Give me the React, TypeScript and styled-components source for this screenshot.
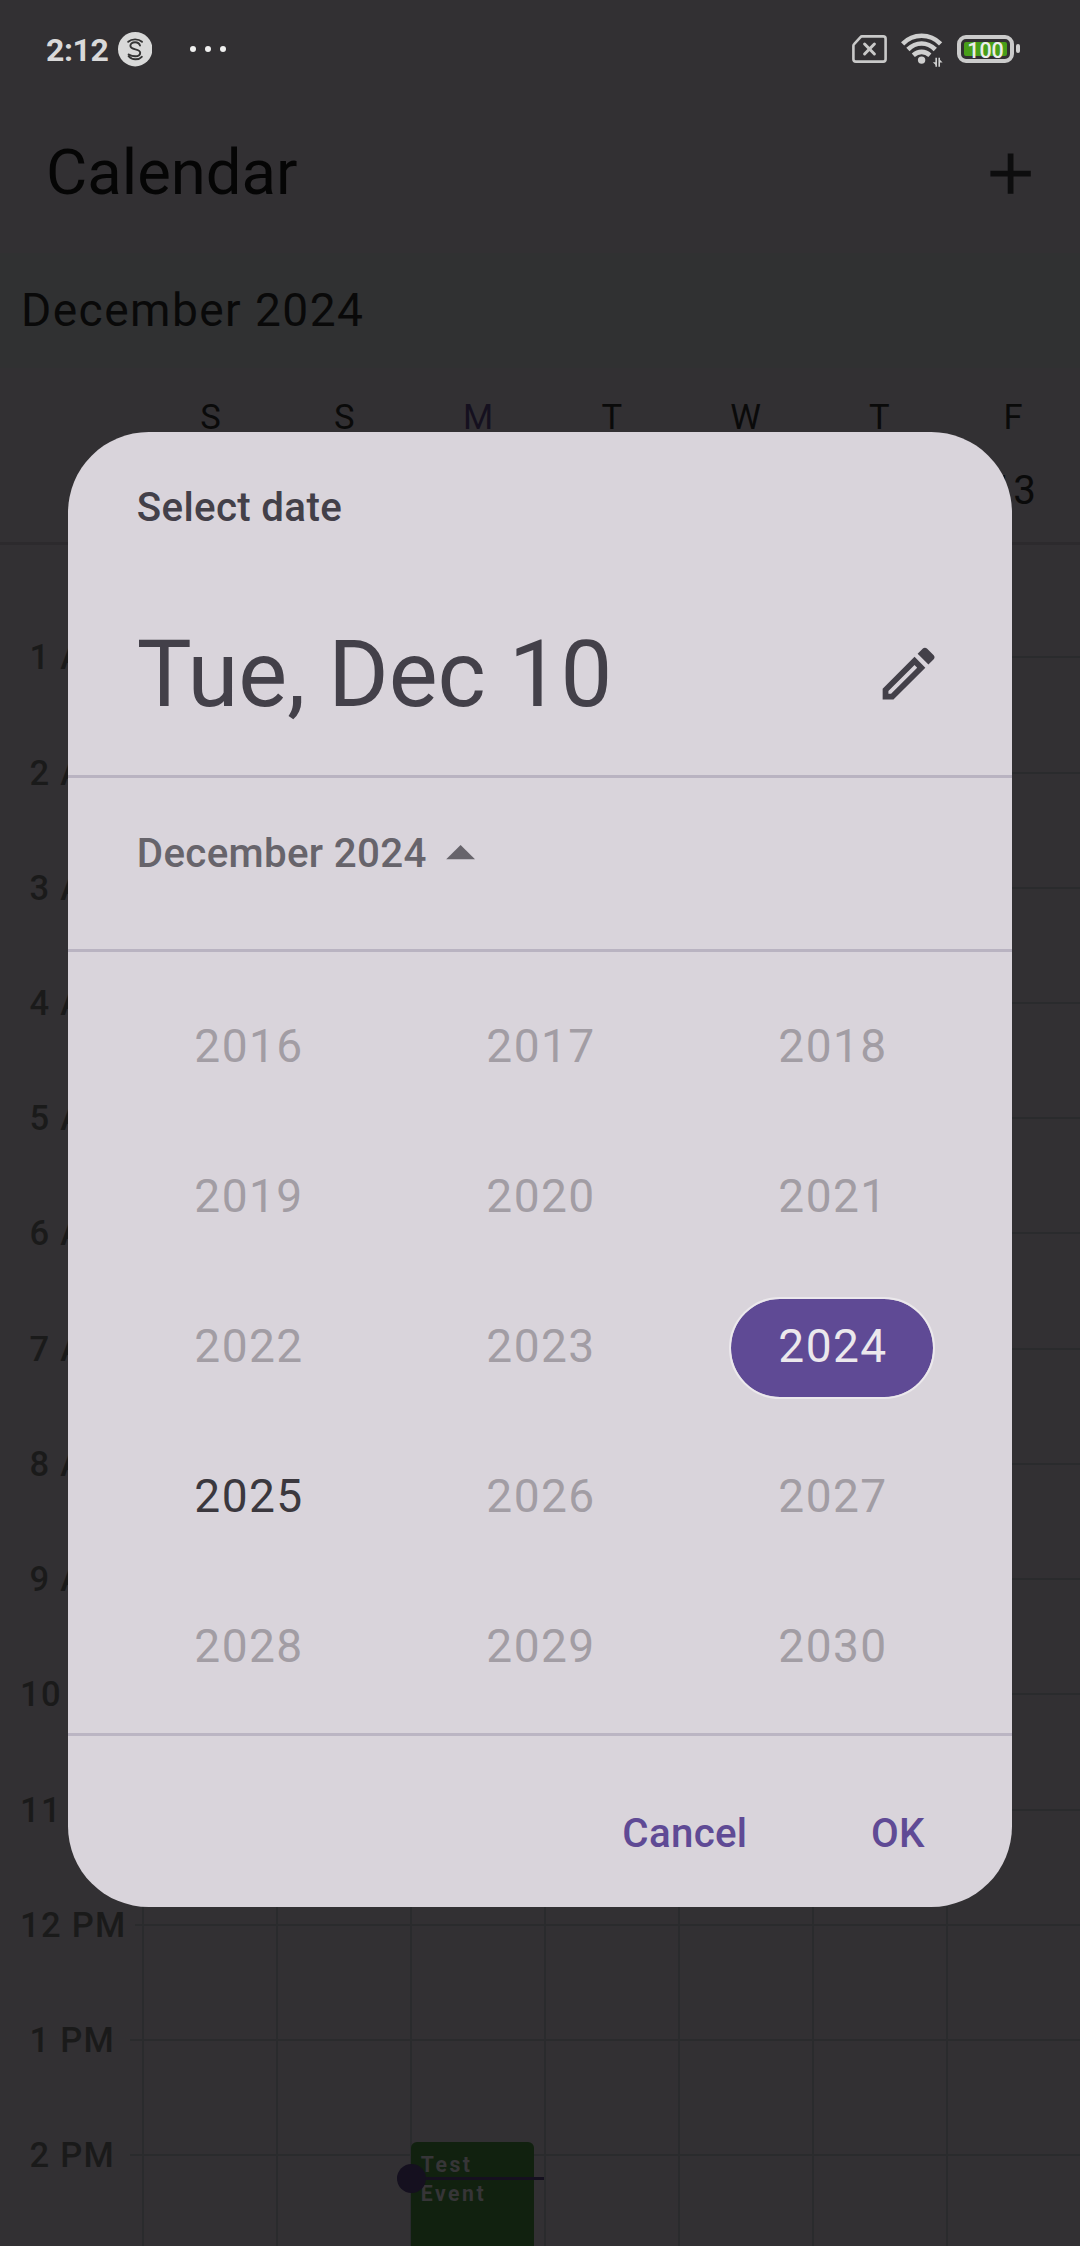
import React from "react";
import styled, { createGlobalStyle } from "styled-components";

const GlobalStyle = createGlobalStyle`
  *, *::before, *::after { box-sizing: border-box; }
  body { margin: 0; background: #323033; }
  button { border: 0; background: none; padding: 0; font: inherit; color: inherit; letter-spacing: inherit; }
  svg { display: block; flex: none; }
`;

const Screen = styled.div`
  position: relative;
  width: 1080px;
  height: 2246px;
  overflow: hidden;
  display: flex;
  flex-direction: column;
  background: #323033;
  color: #050505;
  font-family: Roboto, "Liberation Sans", sans-serif;
  white-space: nowrap;
`;

/* ---------- status bar ---------- */

const StatusBar = styled.div`
  height: 92px;
  flex: none;
  padding: 7px 60px 0 46px;
  display: flex;
  align-items: center;
  justify-content: space-between;
  color: #d9d9d9;
`;

const StatusGroup = styled.div<{ $gap: number }>`
  display: flex;
  align-items: center;
  gap: ${(p) => p.$gap}px;
`;

const Clock = styled.span`
  width: 63px;
  font-size: 32px;
  font-weight: 700;
  line-height: 36px;
  letter-spacing: -0.4px;
`;

const Dots = styled.div`
  display: flex;
  gap: 9px;
  margin-left: 30px;
  margin-top: -1px;
`;

const Dot = styled.i`
  width: 6px;
  height: 6px;
  border-radius: 50%;
  background: #f0f0f0;
`;

const Battery = styled.div`
  display: flex;
  align-items: center;
  gap: 2px;
  margin-top: -2px;
`;

const BatteryCase = styled.div`
  width: 57px;
  height: 28px;
  padding: 3px;
  border: 4px solid #cbcbcb;
  border-radius: 9px;
`;

const BatteryLevel = styled.div`
  width: 43px;
  height: 14px;
  border-radius: 2px;
  background: #489e19;
  color: #ececec;
  font-size: 21.5px;
  font-weight: 500;
  line-height: 17px;
  text-align: center;
`;

const BatteryTip = styled.div`
  width: 4px;
  height: 9px;
  border-radius: 2px;
  background: #cfcfcf;
`;

/* ---------- app bar and week header ---------- */

const AppBar = styled.header`
  height: 161px;
  flex: none;
  padding: 2px 34.6px 0 46.1px;
  display: flex;
  align-items: center;
  justify-content: space-between;
`;

const Title = styled.h1`
  margin: -3px 0 0;
  font-size: 63.4px;
  font-weight: 400;
  line-height: 80px;
`;

const MonthBar = styled.div`
  height: 115.3px;
  flex: none;
  padding: 0 0 2px 21px;
  display: flex;
  align-items: center;
  background: #303132;
  color: #090909;
  font-size: 46.1px;
  letter-spacing: 1.44px;
`;

const WeekHeader = styled.div`
  height: 177.2px;
  flex: none;
  display: flex;
  padding: 31px 0 0 143.7px;
  border-bottom: 3px solid #2c2a2d;
`;

const WeekDay = styled.div<{ $today?: boolean }>`
  flex: 1;
  display: flex;
  flex-direction: column;
  align-items: center;
  color: ${(p) => (p.$today ? "#15101f" : "#0a0a0a")};
`;

const DayName = styled.span`
  font-size: 34.6px;
  line-height: 36px;
`;

const DayNumber = styled.span`
  margin-top: 33px;
  font-size: 40.3px;
  line-height: 46px;
`;

/* ---------- hour grid ---------- */

const Timetable = styled.div`
  flex: 1;
  min-height: 0;
  display: grid;
  grid-template: minmax(0, 1fr) / 1fr;
`;

const DayColumns = styled.div`
  grid-area: 1 / 1;
  display: flex;
  padding-left: 142px;
  margin-right: 0.6px;
`;

const DayColumn = styled.div`
  position: relative;
  flex: 1;
  border-left: 2px solid #2a2b2d;
`;

const Hours = styled.div`
  grid-area: 1 / 1;
  padding-top: 54.3px;
  overflow: hidden;
`;

const HourRow = styled.div`
  height: 115.22px;
  display: flex;
  align-items: center;
`;

const HourLabel = styled.span<{ $wide: boolean }>`
  width: ${(p) => (p.$wide ? 134.6 : 130)}px;
  flex: none;
  padding-left: ${(p) => (p.$wide ? 20 : 29.5)}px;
  color: #1a1a1a;
  font-size: 34.6px;
  font-weight: 500;
  line-height: 44px;
  letter-spacing: 1.25px;
`;

const HourLine = styled.div`
  flex: 1;
  height: 2px;
  background: #2a2b2d;
`;

const EventBlock = styled.div`
  position: absolute;
  top: 1596.7px;
  left: -1px;
  width: 123px;
  height: 160px;
  padding: 8px 10px;
  border-radius: 6px;
  background: #11210f;
  color: #363537;
  font-size: 21.2px;
  font-weight: 700;
  line-height: 29px;
  letter-spacing: 2.5px;
  white-space: normal;
`;

const NowMarker = styled.div`
  position: absolute;
  top: 1618.3px;
  left: -15px;
  right: 0;
  display: flex;
  align-items: center;
`;

const NowDot = styled.i`
  width: 29px;
  height: 29px;
  border-radius: 50%;
  background: #15101f;
`;

const NowLine = styled.i`
  flex: 1;
  height: 3px;
  background: #15101f;
`;

/* ---------- date dialog ---------- */

const Overlay = styled.div`
  position: absolute;
  inset: 0;
  padding-top: 431.7px;
  display: flex;
  justify-content: center;
  align-items: flex-start;
`;

const Dialog = styled.section`
  width: 944.8px;
  height: 1475.3px;
  border-radius: 80.7px;
  overflow: hidden;
  display: flex;
  flex-direction: column;
  background: #d9d4db;
  color: #434049;
`;

const DialogHeader = styled.header`
  height: 346.2px;
  flex: none;
  padding: 47.5px 69.2px 43.2px 69.2px;
  border-bottom: 3px solid #b9b3c1;
  display: flex;
  flex-direction: column;
  justify-content: space-between;
`;

const Supporting = styled.div`
  font-size: 40.3px;
  font-weight: 500;
  line-height: 58px;
  letter-spacing: 0.32px;
`;

const HeadlineRow = styled.div`
  display: flex;
  align-items: center;
  justify-content: space-between;

  svg { margin-top: -2px; }
`;

const Headline = styled.h2`
  margin: 0;
  font-size: 92.2px;
  font-weight: 400;
  line-height: 115px;
`;

const MonthToggle = styled.div`
  height: 174.2px;
  flex: none;
  padding: 47.3px 69.2px 0;
  border-bottom: 3px solid #b9b3c1;
  display: flex;
  align-items: flex-start;
  color: #67646b;

  svg { margin: -6px 0 0 -0.7px; }
`;

const Years = styled.div`
  height: 783.7px;
  flex: none;
  padding: 21.5px 34.4px 0;
  border-bottom: 3px solid #bbb5c3;
  display: grid;
  grid-template-columns: repeat(3, 292px);
  grid-auto-rows: 149.85px;
  place-items: center;
`;

type YearState = "disabled" | "enabled" | "selected";

const yearColor: Record<YearState, string> = {
  disabled: "#a29da4",
  enabled: "#3b383e",
  selected: "#ebe8ec",
};

const YearButton = styled.button<{ $state: YearState }>`
  width: 206px;
  height: 102.6px;
  padding: 0 0 4px 2px;
  border-radius: 52px;
  border: 2px solid ${(p) => (p.$state === "selected" ? "#ebe8ec" : "transparent")};
  background: ${(p) => (p.$state === "selected" ? "#5f4a95" : "transparent")};
  background-clip: padding-box;
  color: ${(p) => yearColor[p.$state]};
  font-size: 46.1px;
  letter-spacing: 1.44px;
`;

const Actions = styled.footer`
  flex: 1;
  padding: 25px 87.7px 0 0;
  display: flex;
  align-items: center;
  justify-content: flex-end;
  gap: 123.5px;
  color: #5f4a95;
  font-size: 40.3px;
  font-weight: 500;
  letter-spacing: 0.29px;
`;

/* Only the last date of the week stays clear of the open dialog. */
const days: { name: string; date?: number; today?: boolean }[] = [
  { name: "S" },
  { name: "S" },
  { name: "M", today: true },
  { name: "T" },
  { name: "W" },
  { name: "T" },
  { name: "F", date: 13 },
];

const hours = Array.from({ length: 14 }, (_, i) => {
  const h = i + 1;
  return `${h > 12 ? h - 12 : h} ${h >= 12 ? "PM" : "AM"}`;
});

const years = Array.from({ length: 15 }, (_, i) => 2016 + i);

const yearState = (y: number): YearState =>
  y === 2024 ? "selected" : y === 2025 ? "enabled" : "disabled";

const BadgeIcon = () => (
  <svg width="34.4" height="34.4" viewBox="0 0 34.4 34.4" fill="none">
    <circle cx="17.2" cy="17.2" r="17.2" fill="#d9d9d9" />
    <g stroke="#343434" strokeWidth="1.9" strokeLinecap="round" strokeLinejoin="round">
      <path d="M10.2 9.8c3.6-3.2 10.2-3.2 13.8 0" />
      <path d="M22 13.5c-.6-2-2.4-3.2-4.9-3.2-2.9 0-4.7 1.5-4.7 3.5 0 4.9 9.8 2.2 9.8 7 0 2.1-2 3.5-4.9 3.5-4.1 0-6.4-1.7-6.7-1.8" />
      <path d="M10.6 24.2c3.4 4 10 4.1 13.2.6" />
    </g>
  </svg>
);

const SimIcon = () => (
  <svg width="35" height="30" viewBox="0 0 35 30" fill="none" stroke="#c9c9c9">
    <path
      d="M10 1.4h21.2q2.4 0 2.4 2.4v20.4q0 2.4-2.4 2.4H3.8q-2.4 0-2.4-2.4V10.8q0-1 .7-1.700L8.5 2.2q.6-.8 1.5-.8Z"
      strokeWidth="2.6"
    />
    <path d="M12.6 9l9.8 10M22.4 9l-9.8 10" strokeWidth="3" strokeLinecap="round" />
  </svg>
);

const WifiIcon = () => (
  <svg width="42" height="34" viewBox="0 0 42 34" fill="none" stroke="#cfcfcf">
    <path d="M1.6 10.8C12.3.1 28.9.1 39.600 10.8" strokeWidth="4.6" />
    <path d="M6.9 16.5C15 8.400 26.200 8.400 34.300 16.500" strokeWidth="4.6" />
    <path d="M12.300 22.200c4.900-4.400 11.700-4.400 16.600 0" strokeWidth="4.6" />
    <circle cx="20.600" cy="27.100" r="3.700" fill="#cfcfcf" stroke="none" />
    <path d="M35.200 24.800v9M38.200 33.800v-9" strokeWidth="1.600" />
    <path d="M35.200 32.600l-3.400-3.400h3.400zM38.200 26l3.400 3.600h-3.400z" fill="#cfcfcf" stroke="none" />
  </svg>
);

const MaterialIcon = ({ d, color }: { d: string; color: string }) => (
  <svg width="69.2" height="69.2" viewBox="0 0 24 24" fill={color}>
    <path d={d} fillRule="evenodd" />
  </svg>
);

const PLUS = "M19 13h-6v6h-2v-6H5v-2h6V5h2v6h6v2z";
const PENCIL =
  "M14.06 9.02l.92.92L5.92 19H5v-.92l9.06-9.06M17.66 3c-.25 0-.51.1-.7.29l-1.83 1.83 3.75 3.75 1.83-1.83c.39-.39.39-1.02 0-1.41l-2.34-2.34c-.2-.2-.45-.29-.71-.29zM14.06 6.19L3 17.25V21h3.75L17.81 9.94l-3.75-3.75z";
const ARROW_UP = "M7 14l5-5 5 5z";

export default function App() {
  return (
    <>
      <GlobalStyle />
      <Screen>
        <StatusBar>
          <StatusGroup $gap={8.5}>
            <Clock>2:12</Clock>
            <BadgeIcon />
            <Dots>
              <Dot />
              <Dot />
              <Dot />
            </Dots>
          </StatusGroup>
          <StatusGroup $gap={14}>
            <SimIcon />
            <WifiIcon />
            <Battery>
              <BatteryCase>
                <BatteryLevel>100</BatteryLevel>
              </BatteryCase>
              <BatteryTip />
            </Battery>
          </StatusGroup>
        </StatusBar>

        <AppBar>
          <Title>Calendar</Title>
          <MaterialIcon d={PLUS} color="#0d0d0e" />
        </AppBar>
        <MonthBar>December 2024</MonthBar>
        <WeekHeader>
          {days.map((day, i) => (
            <WeekDay key={i} $today={day.today}>
              <DayName>{day.name}</DayName>
              {day.date && <DayNumber>{day.date}</DayNumber>}
            </WeekDay>
          ))}
        </WeekHeader>

        <Timetable>
          <Hours>
            {hours.map((h) => (
              <HourRow key={h}>
                <HourLabel $wide={h.length > 4}>{h}</HourLabel>
                <HourLine />
              </HourRow>
            ))}
          </Hours>
          <DayColumns>
            {days.map((day, i) => (
              <DayColumn key={i}>
                {day.today && (
                  <>
                    <EventBlock>Test Event</EventBlock>
                    <NowMarker>
                      <NowDot />
                      <NowLine />
                    </NowMarker>
                  </>
                )}
              </DayColumn>
            ))}
          </DayColumns>
        </Timetable>

        <Overlay>
          <Dialog role="dialog" aria-label="Select date">
            <DialogHeader>
              <Supporting>Select date</Supporting>
              <HeadlineRow>
                <Headline>Tue, Dec 10</Headline>
                <MaterialIcon d={PENCIL} color="#434049" />
              </HeadlineRow>
            </DialogHeader>
            <MonthToggle>
              <Supporting>December 2024</Supporting>
              <MaterialIcon d={ARROW_UP} color="#67646b" />
            </MonthToggle>
            <Years>
              {years.map((y) => (
                <YearButton key={y} $state={yearState(y)}>
                  {y}
                </YearButton>
              ))}
            </Years>
            <Actions>
              <button>Cancel</button>
              <button>OK</button>
            </Actions>
          </Dialog>
        </Overlay>
      </Screen>
    </>
  );
}
